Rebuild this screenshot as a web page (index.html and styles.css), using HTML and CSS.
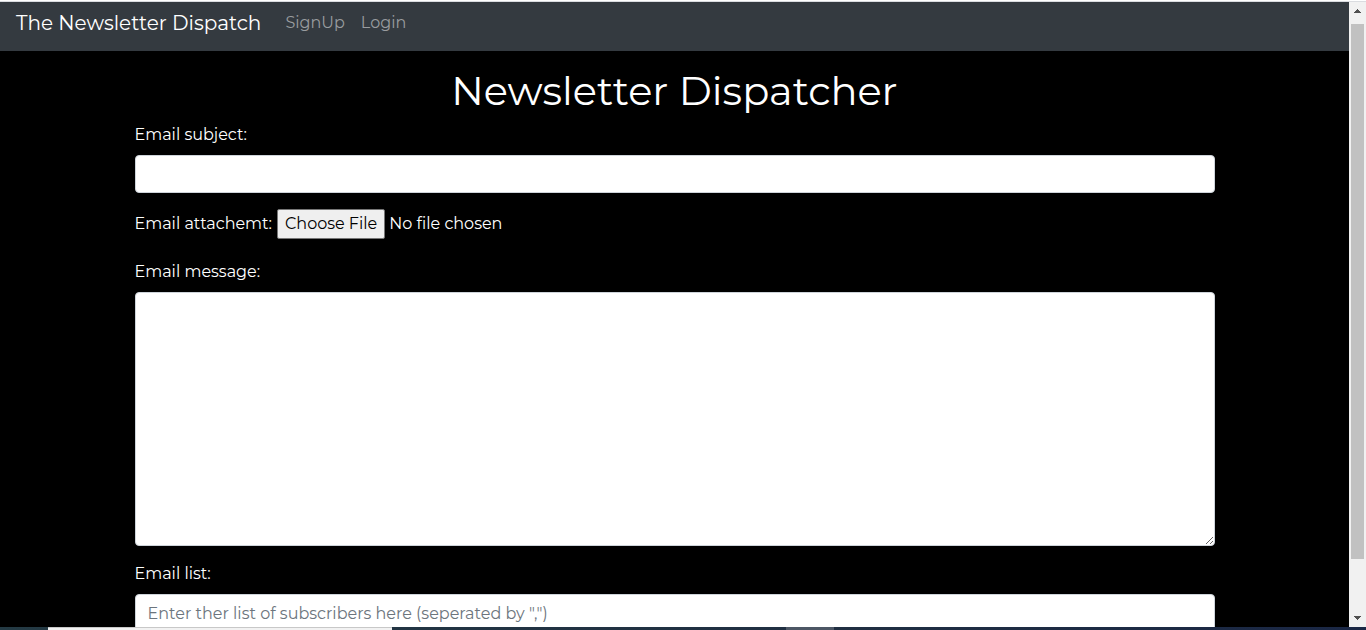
FILE: index.html
```html
<!DOCTYPE html>
<html lang="en">
<head>
<meta charset="utf-8">
<meta name="viewport" content="width=device-width, initial-scale=1">
<title>The Newsletter Dispatch</title>
<link rel="stylesheet" href="styles.css">
</head>
<body>
<div class="window">
  <div class="window-edge"></div>
  <div class="viewport">
    <div class="page">
      <nav class="navbar">
        <a class="brand" href="#">The Newsletter Dispatch</a>
        <a class="nav-link" href="#">SignUp</a>
        <a class="nav-link" href="#">Login</a>
      </nav>
      <main class="container">
        <h1 class="title">Newsletter Dispatcher</h1>
        <form>
          <div class="form-group">
            <label class="label" for="subject">Email subject:</label>
            <input class="control" id="subject" type="text">
          </div>
          <div class="file-group">
            <label class="file-label" for="attachment">Email attachemt:</label>
            <input class="file" id="attachment" type="file">
          </div>
          <div class="form-group">
            <label class="label" for="message">Email message:</label>
            <textarea class="control message" id="message" rows="10"></textarea>
          </div>
          <div class="form-group">
            <label class="label" for="list">Email list:</label>
            <input class="control" id="list" type="text" placeholder="Enter ther list of subscribers here (seperated by &quot;,&quot;)">
          </div>
        </form>
      </main>
    </div>
    <div class="scrollbar" aria-hidden="true">
      <svg class="arrow" viewBox="0 0 7 4" shape-rendering="crispEdges"><path d="M3 0h1v1h1v1h1v1h1v1H0V3h1V2h1V1h1z"/></svg>
      <div class="track"><div class="thumb"></div></div>
      <svg class="arrow" viewBox="0 0 7 4" shape-rendering="crispEdges"><path d="M3 4h1V3h1V2h1V1h1V0H0v1h1v1h1v1h1z"/></svg>
    </div>
  </div>
  <div class="taskbar"><div class="search"></div><div class="task"></div></div>
</div>
</body>
</html>
```
FILE: styles.css
```css
*, *::before, *::after { box-sizing: border-box; }

body {
  margin: 0;
  background: #000;
  color: #fff;
  font-family: Montserrat, Inter, sans-serif;
  font-size: 16px;
  line-height: 24px;
}

.window {
  display: flex;
  flex-direction: column;
  height: 100vh;
  overflow: hidden;
}

.window-edge {
  flex: none;
  height: 2px;
  background: #fff;
  border-bottom: 1px solid #dadce0;
}

.viewport {
  display: flex;
  flex: 1;
  min-height: 0;
}

.page {
  flex: 1;
  min-width: 0;
  overflow: hidden;
}

.navbar {
  display: flex;
  align-items: center;
  padding: 1px 16px 8px;
  background: #343a40;
}

.brand {
  margin-right: 16px;
  color: #fff;
  font-size: 20px;
  line-height: 40px;
  text-decoration: none;
}

.nav-link {
  padding: 0 8px;
  color: #999c9f;
  text-decoration: none;
}

.container {
  max-width: 1110px;
  margin: 0 auto;
  padding: 16px 15px;
}

.title {
  margin: 0 0 8px;
  font-size: 40px;
  font-weight: 400;
  line-height: 48px;
  text-align: center;
}

.form-group { margin-bottom: 16px; }

.label {
  display: block;
  margin-bottom: 8px;
}

.control {
  display: block;
  width: 100%;
  height: 38px;
  padding: 6px 12px;
  border: 1px solid #ced4da;
  border-radius: 4px;
  background: #fff;
  color: #495057;
  font: inherit;
}

.control::placeholder {
  color: #6c757d;
  opacity: 1;
}

.message {
  height: auto;
  resize: vertical;
}

.file-group {
  display: flex;
  align-items: center;
  gap: 5px;
  margin-bottom: 21px;
}

.file {
  flex: 1;
  min-width: 0;
  color: #fff;
  font: inherit;
}

.file::file-selector-button {
  margin: 0 4px 0 0;
  padding: 2px 7px;
  border: 1px solid #767676;
  border-radius: 2px;
  background: #efefef;
  color: #000;
  font: inherit;
}

.scrollbar {
  display: flex;
  flex: none;
  flex-direction: column;
  align-items: center;
  width: 17px;
  padding: 7px 0;
  background: #f1f1f1;
}

.arrow {
  width: 7px;
  height: 4px;
  fill: #505050;
}

.track {
  flex: 1;
  width: 13px;
  padding: 11px 0 10px;
}

.thumb {
  height: 92%;
  background: #c1c1c1;
}

.taskbar {
  display: flex;
  flex: none;
  height: 3px;
  padding-left: 48px;
  background: linear-gradient(90deg, #243a44, #202f42 60%, #1a2745);
}

.search {
  width: 344px;
  background: #f2f2f2;
  border-top: 1px solid #c8c8c8;
}

.task {
  width: 48px;
  margin-left: 394px;
  background: #4d5765;
}
```
